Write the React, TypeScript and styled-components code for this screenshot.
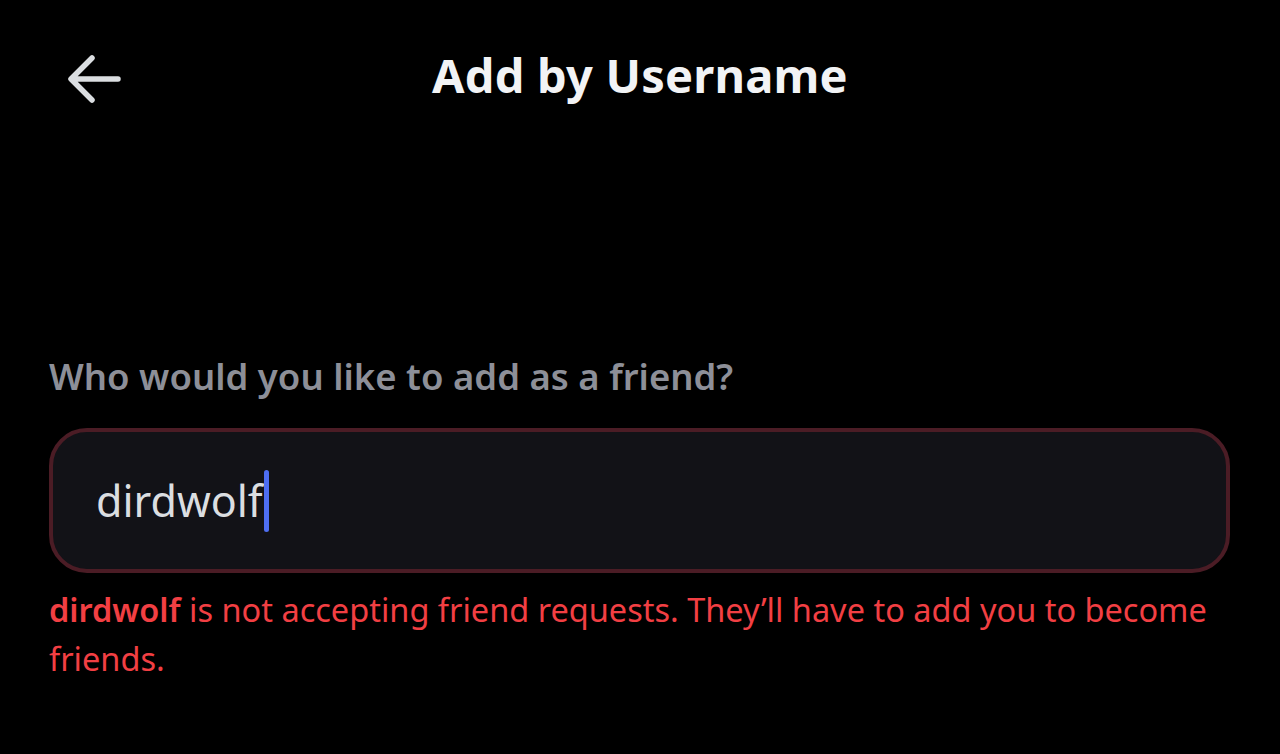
import React from 'react';
import styled, { createGlobalStyle } from 'styled-components';

const GlobalStyle = createGlobalStyle`
  html, body {
    margin: 0;
    padding: 0;
    background: #000;
    font-family: "Noto Sans", "Open Sans", sans-serif;
  }
`;

const App = () => {
  const username = 'dirdwolf';

  return (
    <>
      <GlobalStyle />
      <Page>
        <Header>
          <BackButton aria-label="Back">
            <svg width="58" height="54" viewBox="0 0 58 54" fill="none">
              <path
                d="M52 27H6M26 6L5 27l21 21"
                stroke="#dbdee1"
                strokeWidth="5.5"
                strokeLinecap="round"
                strokeLinejoin="round"
              />
            </svg>
          </BackButton>
          <Title>Add by Username</Title>
        </Header>

        <Form>
          <Label>Who would you like to add as a friend?</Label>
          <InputBox $error>
            <InputText>{username}</InputText>
            <Caret />
          </InputBox>
          <ErrorText>
            <strong>{username}</strong> is not accepting friend requests. They’ll have to add you to become friends.
          </ErrorText>
        </Form>
      </Page>
    </>
  );
};

const Page = styled.div`
  width: 1280px;
  height: 754px;
  background: #000;
  display: flex;
  flex-direction: column;
  overflow: hidden;
`;

const Header = styled.header`
  position: relative;
  height: 154px;
  display: flex;
  align-items: flex-start;
  justify-content: center;
  padding-top: 45px;
  box-sizing: border-box;
`;

const BackButton = styled.button`
  position: absolute;
  left: 66px;
  top: 52px;
  padding: 0;
  border: none;
  background: none;
  display: flex;
`;

const Title = styled.h1`
  margin: 0;
  color: #f2f3f5;
  font-size: 47px;
  font-weight: 700;
  line-height: 60px;
  letter-spacing: 0.2px;
`;

const Form = styled.section`
  display: flex;
  flex-direction: column;
  padding: 198px 50px 0 49px;
`;

const Label = styled.label`
  color: #8d8f98;
  font-size: 36.5px;
  font-weight: 600;
  line-height: 48px;
  margin-bottom: 28px;
`;

const InputBox = styled.div<{ $error?: boolean }>`
  height: 145px;
  box-sizing: border-box;
  border: 4px solid ${p => (p.$error ? '#4b1c25' : '#26272d')};
  border-radius: 38px;
  background: #121217;
  display: flex;
  align-items: center;
  padding-left: 43px;
`;

const InputText = styled.span`
  color: #dbdee1;
  font-size: 43px;
  line-height: 52px;
`;

const Caret = styled.span`
  width: 5px;
  height: 62px;
  margin-left: 1px;
  border-radius: 3px;
  background: #4e6ef2;
`;

const ErrorText = styled.p`
  margin: 12px 0 0;
  color: #f23f43;
  font-size: 32.5px;
  line-height: 49px;

  strong {
    font-weight: 600;
  }
`;

export default App;
